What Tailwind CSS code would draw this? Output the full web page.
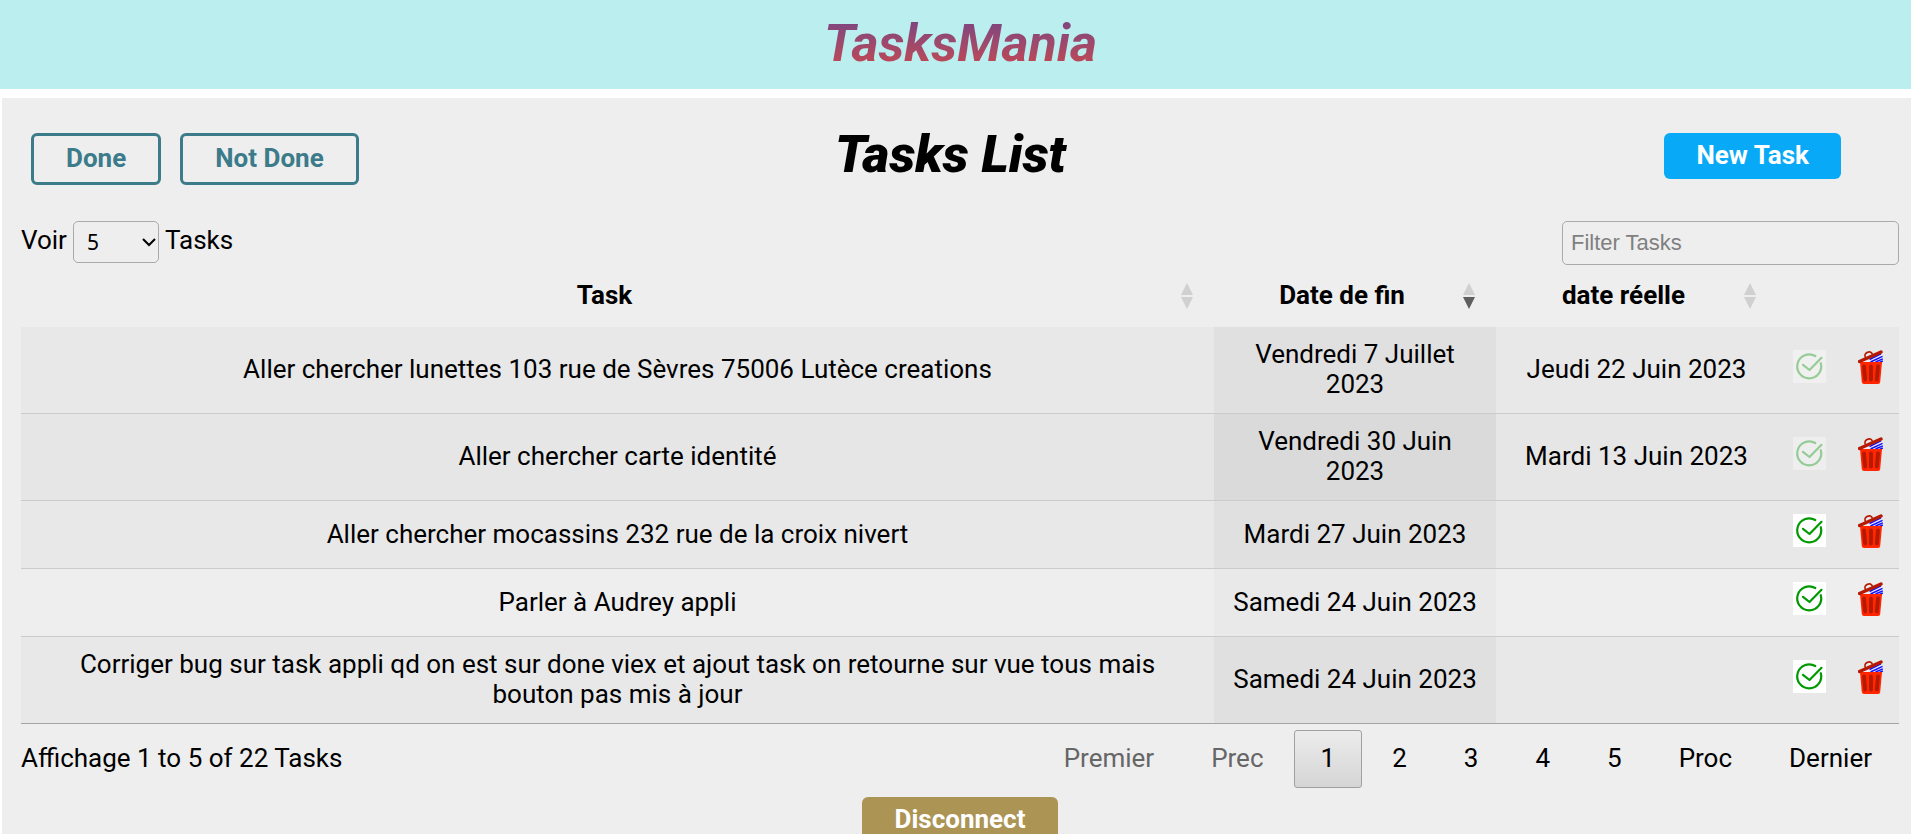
<!DOCTYPE html>
<html lang="fr">
<head>
  <meta charset="UTF-8" />
  <meta name="viewport" content="width=device-width, initial-scale=1.0"/>
  <title>TasksMania</title>
  <script src="https://cdn.jsdelivr.net/npm/@tailwindcss/browser@4"></script>
</head>
<body class="h-screen flex flex-col bg-white text-black font-[Roboto,sans-serif] text-[26px] leading-[30px] overflow-hidden">

  <!-- Shared icons -->
  <svg class="hidden">
    <symbol id="check" viewBox="0 0 33 33">
      <path d="M22.300 6A12 12 0 1 0 27.800 13.200" fill="none" stroke="currentColor" stroke-width="2.200" stroke-linecap="round"/>
      <path d="M10 14.800L16.500 20L28.500 7.800" fill="none" stroke="currentColor" stroke-width="2.200" stroke-linecap="round" stroke-linejoin="round"/>
    </symbol>
    <symbol id="trash" viewBox="0 0 26 34">
      <path d="M4 12L13 7L23 3L24 12Z" fill="#f0ebf0"/>
      <path d="M11.500 9.500L23 3.800M12.500 12L24.500 6.300M17.500 12L24.800 8.800M21.500 12.500L24.800 11" stroke="#1010ff" stroke-width="1.400"/>
      <path d="M2 12H24L22.200 32Q22 34 20 34H6Q4 34 3.800 32Z" fill="#ff2600"/>
      <path d="M6 16.500L7.200 29.500M13 16.500V29.500M20 16.500L18.800 29.500" stroke="#b51a00" stroke-width="3.800" stroke-linecap="round"/>
      <path d="M1.500 11.500L23 2" stroke="#b51a00" stroke-width="3.400" stroke-linecap="round"/>
      <path d="M7.800 8Q5.500 4.500 9 2.500Q13 .5 14.500 4.500" fill="none" stroke="#b51a00" stroke-width="1.600"/>
    </symbol>
    <symbol id="up" viewBox="0 0 12 12"><path d="M6 0L12 12H0Z" fill="currentColor"/></symbol>
    <symbol id="down" viewBox="0 0 12 12"><path d="M0 0H12L6 12Z" fill="currentColor"/></symbol>
  </svg>

  <header class="h-[89px] shrink-0 bg-[#bbeeee] flex items-center justify-center">
    <h1 class="text-[52px] leading-[60px] pl-3 pb-[2px] pr-[2px] font-bold italic bg-linear-to-b from-[#734385] to-[#d04444] bg-clip-text text-transparent">TasksMania</h1>
  </header>

  <main class="mt-[9px] mb-[6px] ml-[2px] flex-1 min-h-0 overflow-hidden bg-[#eeeeee]">

    <div class="grid grid-cols-[1fr_auto_1fr] items-start pt-[35px] h-[123px]">
      <div class="flex gap-[19px] pl-[29px]">
        <button type="button" class="px-8 pt-[7px] pb-[9px] border-3 border-[#3b7b8a] rounded-md text-[#3b7b8a] font-bold">Done</button>
        <button type="button" class="px-8 pt-[7px] pb-[9px] border-3 border-[#3b7b8a] rounded-md text-[#3b7b8a] font-bold">Not Done</button>
      </div>
      <h2 class="text-[52px] leading-[44px] pr-3 font-black italic">Tasks List</h2>
      <div class="flex justify-end pr-[70px]">
        <button type="button" class="px-8 pt-[7px] pb-[9px] rounded-md bg-[#08a9f6] text-white font-bold">New Task</button>
      </div>
    </div>

    <div class="pl-[19px] pr-3">
      <div class="flex justify-between items-start">
        <div class="flex items-center gap-[6px]">
          <label for="length" class="pb-1">Voir</label>
          <div class="relative">
            <select id="length" class="appearance-none w-[86px] h-[42px] pl-[13px] border border-[#aaaaaa] rounded-[5px] font-['Noto_Sans',sans-serif] text-[21px]">
              <option>5</option>
              <option>10</option>
              <option>25</option>
            </select>
            <svg class="absolute right-[3px] top-[17px] w-[14px] h-[9px] pointer-events-none" viewBox="0 0 14 9"><path d="M1 1L7 7L13 1" fill="none" stroke="black" stroke-width="2"/></svg>
          </div>
          <span class="pb-1">Tasks</span>
        </div>
        <input type="search" aria-label="Filter Tasks" placeholder="Filter Tasks" class="w-[337px] h-[44px] px-2 border border-[#aaaaaa] rounded-[5px] font-['Liberation_Sans',sans-serif] text-[22px] placeholder:text-[#808080]">
      </div>

      <table class="w-full table-fixed text-center border-b border-[#a4a4a4]">
        <colgroup>
          <col>
          <col class="w-[282px]">
          <col class="w-[281px]">
          <col class="w-[65px]">
          <col class="w-[57px]">
        </colgroup>
        <thead>
          <tr>
            <th class="relative pt-[15px] pb-[17px] pl-[18px] pr-[44px] font-bold">Task
              <span class="absolute right-[21px] top-[18px] flex flex-col gap-[2px] text-[#d0d0d0]"><svg class="size-3"><use href="#up"/></svg><svg class="size-3"><use href="#down"/></svg></span>
            </th>
            <th class="relative pt-[15px] pb-[17px] pl-[18px] pr-[44px] font-bold">Date de fin
              <span class="absolute right-[21px] top-[18px] flex flex-col gap-[2px] text-[#d0d0d0]"><svg class="size-3"><use href="#up"/></svg><svg class="size-3 text-[#5f5f5f]"><use href="#down"/></svg></span>
            </th>
            <th class="relative pt-[15px] pb-[17px] pl-[18px] pr-[44px] font-bold">date réelle
              <span class="absolute right-[21px] top-[18px] flex flex-col gap-[2px] text-[#d0d0d0]"><svg class="size-3"><use href="#up"/></svg><svg class="size-3"><use href="#down"/></svg></span>
            </th>
            <th></th>
            <th></th>
          </tr>
        </thead>
        <tbody>
          <tr class="bg-[#e8e8e8]">
            <td class="px-[18px] pt-3 pb-[14px]">Aller chercher lunettes 103 rue de Sèvres 75006 Lutèce creations</td>
            <td class="px-[18px] pt-3 pb-[14px] bg-[#e0e0e0]">Vendredi 7 Juillet 2023</td>
            <td class="px-[18px] pt-3 pb-[14px]">Jeudi 22 Juin 2023</td>
            <td class="py-[13px]"><button type="button" aria-label="Terminer" disabled class="block mx-auto mb-2 bg-white text-[#009a00] opacity-35"><svg class="size-[33px]"><use href="#check"/></svg></button></td>
            <td class="py-[13px]"><button type="button" aria-label="Supprimer" class="block mx-auto mb-[7px]"><svg class="w-[26px] h-[34px]"><use href="#trash"/></svg></button></td>
          </tr>
          <tr class="bg-[#e6e6e6] border-t border-[#cbcbcb]">
            <td class="px-[18px] pt-3 pb-[14px]">Aller chercher carte identité</td>
            <td class="px-[18px] pt-3 pb-[14px] bg-[#dadada]">Vendredi 30 Juin 2023</td>
            <td class="px-[18px] pt-3 pb-[14px]">Mardi 13 Juin 2023</td>
            <td class="py-[13px]"><button type="button" aria-label="Terminer" disabled class="block mx-auto mb-2 bg-white text-[#009a00] opacity-35"><svg class="size-[33px]"><use href="#check"/></svg></button></td>
            <td class="py-[13px]"><button type="button" aria-label="Supprimer" class="block mx-auto mb-[7px]"><svg class="w-[26px] h-[34px]"><use href="#trash"/></svg></button></td>
          </tr>
          <tr class="bg-[#e8e8e8] border-t border-[#cbcbcb]">
            <td class="px-[18px] pt-3 pb-[14px]">Aller chercher mocassins 232 rue de la croix nivert</td>
            <td class="px-[18px] pt-3 pb-[14px] bg-[#e0e0e0]">Mardi 27 Juin 2023</td>
            <td class="px-[18px] pt-3 pb-[14px]"></td>
            <td class="py-[13px]"><button type="button" aria-label="Terminer" class="block mx-auto mb-2 bg-white text-[#009a00]"><svg class="size-[33px]"><use href="#check"/></svg></button></td>
            <td class="py-[13px]"><button type="button" aria-label="Supprimer" class="block mx-auto mb-[7px]"><svg class="w-[26px] h-[34px]"><use href="#trash"/></svg></button></td>
          </tr>
          <tr class="bg-[#eeeeee] border-t border-[#cbcbcb]">
            <td class="px-[18px] pt-3 pb-[14px]">Parler à Audrey appli</td>
            <td class="px-[18px] pt-3 pb-[14px] bg-[#e9e9e9]">Samedi 24 Juin 2023</td>
            <td class="px-[18px] pt-3 pb-[14px]"></td>
            <td class="py-[13px]"><button type="button" aria-label="Terminer" class="block mx-auto mb-2 bg-white text-[#009a00]"><svg class="size-[33px]"><use href="#check"/></svg></button></td>
            <td class="py-[13px]"><button type="button" aria-label="Supprimer" class="block mx-auto mb-[7px]"><svg class="w-[26px] h-[34px]"><use href="#trash"/></svg></button></td>
          </tr>
          <tr class="bg-[#e8e8e8] border-t border-[#cbcbcb]">
            <td class="px-[18px] pt-3 pb-[14px]">Corriger bug sur task appli qd on est sur done viex et ajout task on retourne sur vue tous mais bouton pas mis à jour</td>
            <td class="px-[18px] pt-3 pb-[14px] bg-[#e0e0e0]">Samedi 24 Juin 2023</td>
            <td class="px-[18px] pt-3 pb-[14px]"></td>
            <td class="py-[13px]"><button type="button" aria-label="Terminer" class="block mx-auto mb-2 bg-white text-[#009a00]"><svg class="size-[33px]"><use href="#check"/></svg></button></td>
            <td class="py-[13px]"><button type="button" aria-label="Supprimer" class="block mx-auto mb-[7px]"><svg class="w-[26px] h-[34px]"><use href="#trash"/></svg></button></td>
          </tr>
        </tbody>
      </table>

      <div class="flex justify-between items-center pt-[6px]">
        <p class="pb-[2px]">Affichage 1 to 5 of 22 Tasks</p>
        <nav class="flex gap-[3px]" aria-label="Pagination">
          <button type="button" disabled class="px-[26px] pt-3 pb-[14px] border border-transparent text-[#666666]">Premier</button>
          <button type="button" disabled class="px-[26px] pt-3 pb-[14px] border border-transparent text-[#666666]">Prec</button>
          <button type="button" class="px-[26px] pt-3 pb-[14px] border border-[#a0a0a0] rounded-[3px] bg-linear-to-b from-[#ececec] to-[#d5d5d5]">1</button>
          <button type="button" class="px-[26px] pt-3 pb-[14px] border border-transparent">2</button>
          <button type="button" class="px-[26px] pt-3 pb-[14px] border border-transparent">3</button>
          <button type="button" class="px-[26px] pt-3 pb-[14px] border border-transparent">4</button>
          <button type="button" class="px-[26px] pt-3 pb-[14px] border border-transparent">5</button>
          <button type="button" class="px-[26px] pt-3 pb-[14px] border border-transparent">Proc</button>
          <button type="button" class="px-[26px] pt-3 pb-[14px] border border-transparent">Dernier</button>
        </nav>
      </div>

      <div class="flex justify-center pt-[9px]">
        <button type="button" class="px-[33px] pt-[7px] pb-[9px] rounded-md bg-[#ac9455] text-white font-bold">Disconnect</button>
      </div>
    </div>
  </main>
</body>
</html>
